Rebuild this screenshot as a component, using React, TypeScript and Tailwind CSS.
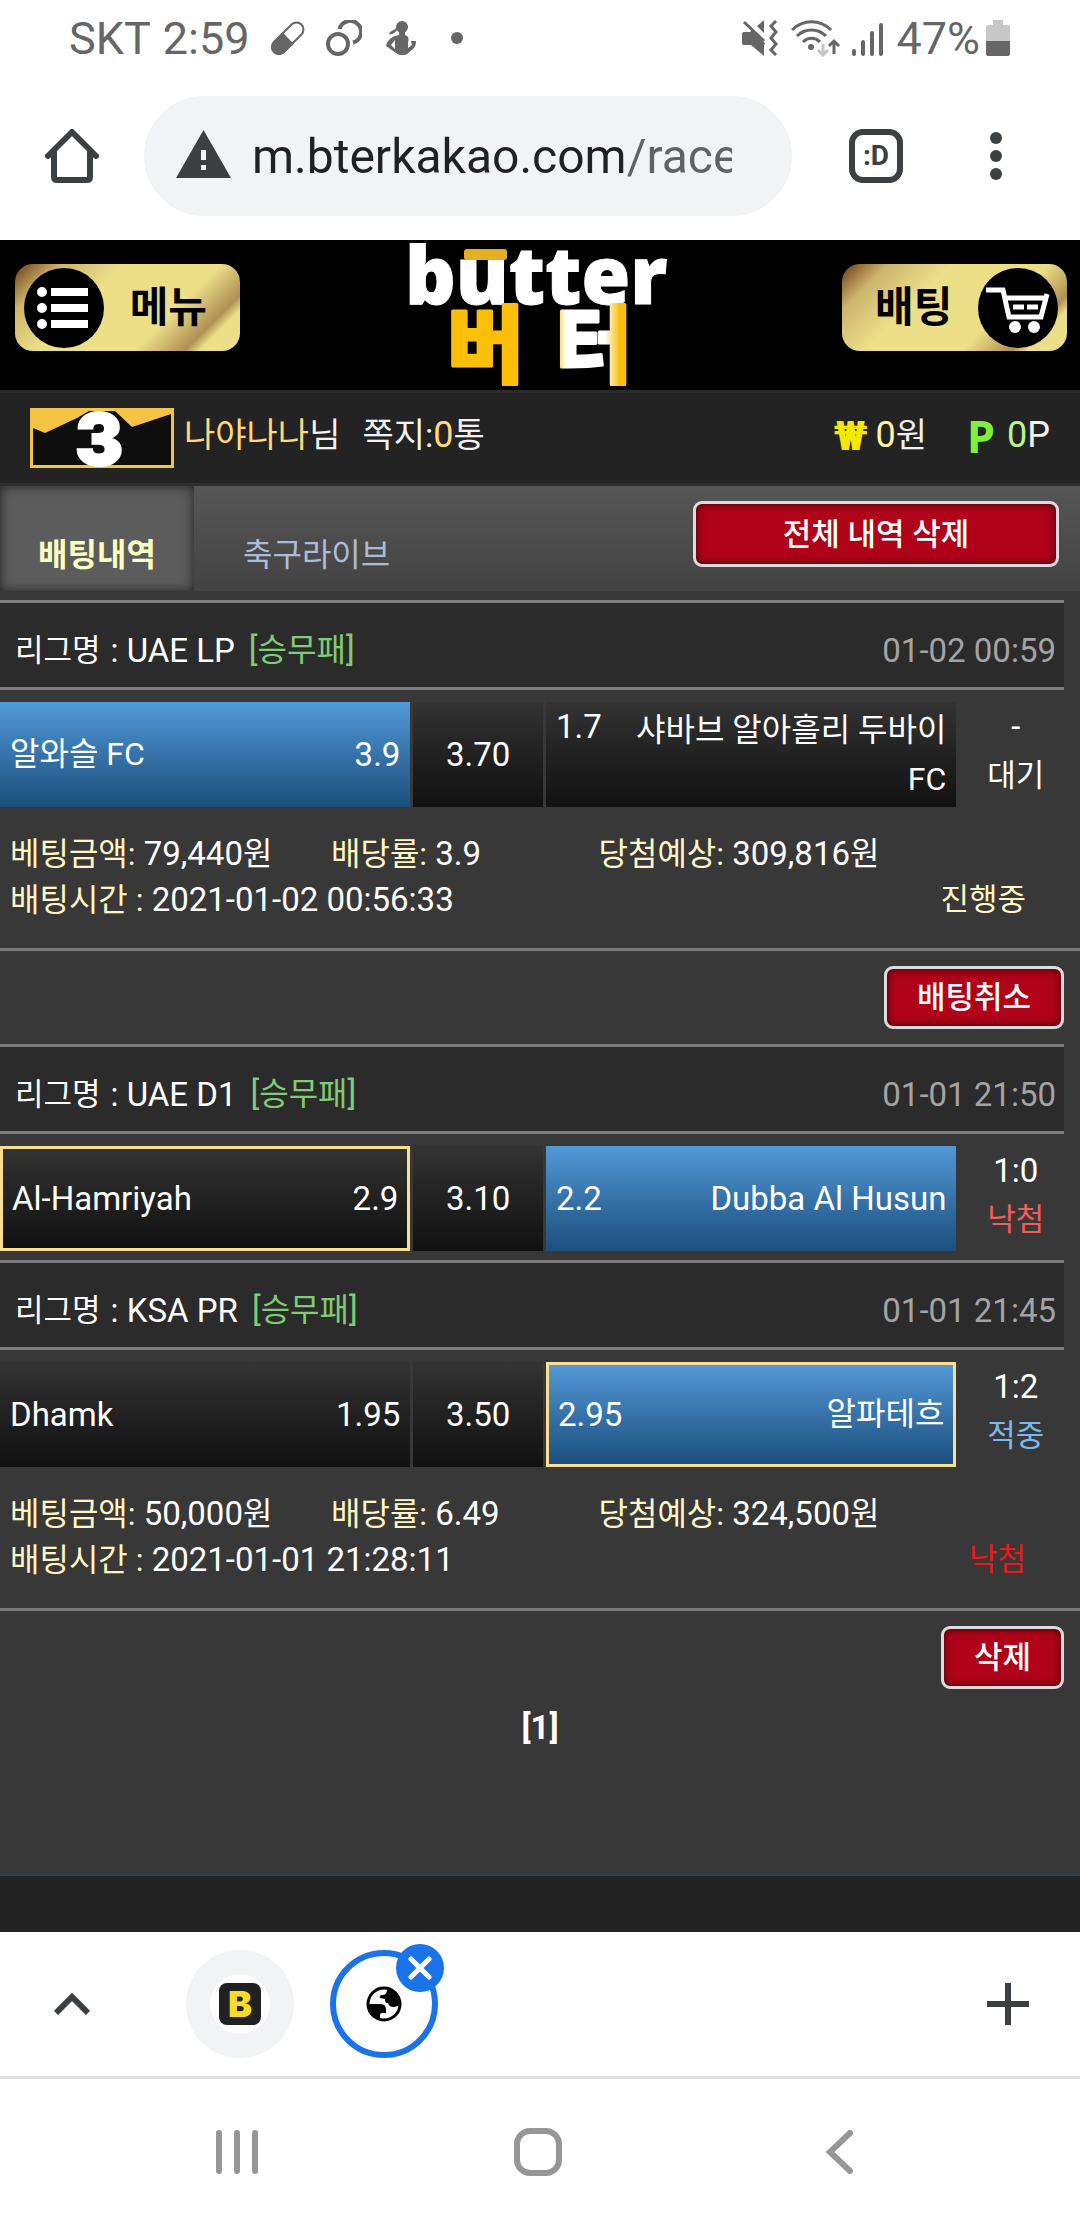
import type { ReactNode } from 'react';
import clsx from 'clsx';

type Side = 'home' | 'away';

interface Match {
  id: number;
  league: string;
  date: string;
  home: string;
  homeOdds: string;
  drawOdds: string;
  away: string;
  awayOdds: string;
  picked: Side;
  winner?: Side;
  score: string;
  result: string;
  resultClass: string;
}

interface Slip {
  id: number;
  matches: Match[];
  amount: string;
  odds: string;
  expected: string;
  time: string;
  status: string;
  statusClass: string;
  action: string;
}

const slips: Slip[] = [
  {
    id: 1,
    matches: [
      {
        id: 11,
        league: 'UAE LP',
        date: '01-02 00:59',
        home: '알와슬 FC',
        homeOdds: '3.9',
        drawOdds: '3.70',
        away: '샤바브 알아흘리 두바이 FC',
        awayOdds: '1.7',
        picked: 'home',
        score: '-',
        result: '대기',
        resultClass: 'text-white',
      },
    ],
    amount: '79,440',
    odds: '3.9',
    expected: '309,816',
    time: '2021-01-02 00:56:33',
    status: '진행중',
    statusClass: 'text-[#fff6c4]',
    action: '배팅취소',
  },
  {
    id: 2,
    matches: [
      {
        id: 21,
        league: 'UAE D1',
        date: '01-01 21:50',
        home: 'Al-Hamriyah',
        homeOdds: '2.9',
        drawOdds: '3.10',
        away: 'Dubba Al Husun',
        awayOdds: '2.2',
        picked: 'away',
        winner: 'home',
        score: '1:0',
        result: '낙첨',
        resultClass: 'text-[#f25c5c]',
      },
      {
        id: 22,
        league: 'KSA PR',
        date: '01-01 21:45',
        home: 'Dhamk',
        homeOdds: '1.95',
        drawOdds: '3.50',
        away: '알파테흐',
        awayOdds: '2.95',
        picked: 'away',
        winner: 'away',
        score: '1:2',
        result: '적중',
        resultClass: 'text-[#7ab8f0]',
      },
    ],
    amount: '50,000',
    odds: '6.49',
    expected: '324,500',
    time: '2021-01-01 21:28:11',
    status: '낙첨',
    statusClass: 'text-[#e81a1a]',
    action: '삭제',
  },
];

function StatusBar() {
  return (
    <div className="flex h-18 items-center justify-between pt-1 pr-[70px] pl-[69px] text-[45px] leading-none text-[#666]">
      <div className="flex items-center">
        <span>SKT</span>
        <span className="ml-3">2:59</span>
        <svg className="ml-5 size-9" viewBox="0 0 36 36" fill="none">
          <g transform="rotate(45 18 18)">
            <rect x="11" y="-1" width="14" height="38" rx="7" stroke="currentColor" strokeWidth="2" />
            <path d="M10 18h16v13a8 8 0 0 1-16 0z" fill="currentColor" />
          </g>
        </svg>
        <svg className="ml-5 size-9" viewBox="0 0 36 36" fill="none" stroke="currentColor" strokeWidth="4">
          <circle cx="12" cy="24" r="10" />
          <path d="M13.500 9A11 11 0 1 1 27 22.500" />
        </svg>
        <svg className="ml-6 h-[34px] w-[30px]" viewBox="0 0 30 34" fill="currentColor">
          <circle cx="16" cy="6" r="6" />
          <path d="M11 6C8 10 5 9 3 13c3 1 6-1 8-4z" />
          <path d="M13 10h6v4c4 1 4 4 3 8v5l4-3-1-4h5c0 4-1 6-3 8l-6 5c-4 2-9 1-11-1l-10-7c1-5 4-8 9-10l4-1zM9 19l-4 5 4 4z" fillRule="evenodd" />
        </svg>
        <span className="ml-[35px] size-3 rounded-full bg-[#666]" />
      </div>
      <div className="flex items-center">
        <svg className="h-9 w-[37px]" viewBox="0 0 37 36" fill="currentColor">
          <path d="M2 12h7L22 24v12L9 25H2a2 2 0 0 1-2-2v-9a2 2 0 0 1 2-2zM22 0v13l-7-7z" />
          <path d="M2 2l20 19" stroke="currentColor" strokeWidth="3" />
          <path d="M8 12l14 13" stroke="currentColor" strokeWidth="4" />
          <path d="M34 1l-5 5 5 6-5 6 5 6-5 6 5 5" fill="none" stroke="currentColor" strokeWidth="3" />
        </svg>
        <svg className="ml-3 h-[37px] w-[49px]" viewBox="0 0 49 37" fill="none" stroke="currentColor" strokeWidth="3">
          <path d="M1 10c11-11 28-11 39 0M6 16c8-8 21-8 29 0M12 22c5-5 12-5 17 0" />
          <circle cx="20" cy="27" r="3" fill="currentColor" stroke="none" />
          <path d="M32 24v11M27 30l5 5 5-5" stroke="#c4c4c4" />
          <path d="M43 34V22M38 26l5-5 5 5" />
        </svg>
        <svg className="ml-3 h-9 w-8" viewBox="0 0 32 36" stroke="currentColor" strokeWidth="4" strokeLinecap="round">
          <path d="M2 31v3M11 22v12M20 13v21M29 5v29" />
        </svg>
        <span className="ml-3">47%</span>
        <svg className="ml-[6px] h-9 w-6" viewBox="0 0 24 36">
          <path d="M7 0h10v5h5a2 2 0 0 1 2 2v14H0V7a2 2 0 0 1 2-2h5z" fill="#c8c8c8" />
          <path d="M0 21h24v13a2 2 0 0 1-2 2H2a2 2 0 0 1-2-2z" fill="#666" />
        </svg>
      </div>
    </div>
  );
}

function AddressBar() {
  return (
    <div className="flex h-[168px] items-center pr-[57px] pl-[45px] text-[#3c4043]">
      <button aria-label="홈">
        <svg className="size-[54px]" viewBox="0 0 54 54" fill="none" stroke="currentColor" strokeWidth="6" strokeLinecap="round">
          <path d="M3 27L27 3l24 24" strokeLinejoin="round" />
          <path d="M9 24v24q0 3 3 3h30q3 0 3-3V24" />
        </svg>
      </button>
      <div className="ml-[45px] flex h-30 min-w-0 flex-1 items-center rounded-full bg-[#f1f3f4] pr-15 pl-8">
        <svg className="mb-1 h-12 w-[55px] shrink-0" viewBox="0 0 55 48">
          <path d="M27.500 0L55 48H0z" fill="currentColor" />
          <path d="M25 20h5v10h-5zM25 35h5v5h-5z" fill="#f1f3f4" />
        </svg>
        <input
          type="text"
          aria-label="주소"
          defaultValue="m.bterkakao.com/race"
          className="ml-[21px] min-w-0 flex-1 bg-linear-[90deg,#202124_371px,#5f6368_371px] bg-clip-text pt-[2px] text-[48px] text-[#202124] outline-none [-webkit-text-fill-color:transparent]"
        />
      </div>
      <button
        aria-label="탭"
        className="ml-[57px] flex size-[54px] items-center justify-center rounded-[14px] border-6 border-[#3c4043] text-[28px] leading-none font-bold"
      >
        :D
      </button>
      <button aria-label="메뉴 더보기" className="ml-[66px] flex w-[54px] flex-col items-center gap-[6px]">
        <span className="size-3 rounded-full bg-[#3c4043]" />
        <span className="size-3 rounded-full bg-[#3c4043]" />
        <span className="size-3 rounded-full bg-[#3c4043]" />
      </button>
    </div>
  );
}

function GoldButton({ children }: { children: ReactNode }) {
  return (
    <button className="flex h-[87px] w-[225px] items-center justify-between rounded-[18px] bg-linear-[135deg,#6b3a14_0%,#cdb56d_15%,#ecdf88_35%,#ecdf88_66%,#b09055_82%,#ecdf88_87%] px-[9px] text-[42px] leading-none font-bold text-black">
      {children}
    </button>
  );
}

function Logo() {
  return (
    <svg className="h-[150px] w-66 overflow-visible" viewBox="0 0 264 150" role="img" aria-label="butter 버터">
      <defs>
        <linearGradient id="melt" x1="0" y1="0" x2="1" y2="0">
          <stop offset="0" stopColor="#fbbf0a" />
          <stop offset="0.14" stopColor="#fff" />
          <stop offset="0.64" stopColor="#fff" />
          <stop offset="0.84" stopColor="#fbbf0a" />
        </linearGradient>
      </defs>
      <text x="-4" y="64" fill="#fff" stroke="#fff" strokeWidth="1" className="font-['Open_Sans',sans-serif] text-[79px] font-extrabold">
        butter
      </text>
      <rect x="55" y="9" width="43" height="11" rx="3" fill="#e2b022" />
      <g strokeWidth="3" strokeLinejoin="round" className="font-['Noto_Sans_CJK_KR',sans-serif] text-[84px] font-black">
        <text x="38" y="136" fill="#fbbf0a" stroke="#fbbf0a">버</text>
        <text x="146" y="136" fill="url(#melt)" stroke="url(#melt)">터</text>
      </g>
    </svg>
  );
}

function SiteHeader() {
  return (
    <header className="flex h-[153px] items-start justify-between border-b-3 border-[#2b2b2b] bg-black pr-[13px] pl-[15px]">
      <div className="pt-6">
        <GoldButton>
          <svg className="size-20" viewBox="0 0 80 80" fill="#fff">
            <circle cx="40" cy="40" r="40" fill="#000" />
            <circle cx="18" cy="24" r="5" />
            <circle cx="18" cy="40" r="5" />
            <circle cx="18" cy="56" r="5" />
            <path d="M27 20h37v8H27zM27 36h37v8H27zM27 52h37v8H27z" />
          </svg>
          <span className="pr-6">메뉴</span>
        </GoldButton>
      </div>
      <Logo />
      <div className="pt-6">
        <GoldButton>
          <span className="pl-6">배팅</span>
          <svg className="size-20" viewBox="0 0 80 80" fill="none" stroke="#fff" strokeWidth="5">
            <circle cx="40" cy="40" r="40" fill="#000" stroke="none" />
            <path d="M8 22h17l6 27h32l6-23M27 30h41" />
            <path d="M35 39h11M49 39h11" />
            <circle cx="37" cy="59" r="6" fill="#fff" stroke="none" />
            <circle cx="56" cy="59" r="6" fill="#fff" stroke="none" />
          </svg>
        </GoldButton>
      </div>
    </header>
  );
}

function UserBar() {
  return (
    <div className="flex h-[93px] items-center border-b-3 border-[#2e2e2e] bg-[#232323] px-[30px] text-[34px] leading-none text-[#f2f2f2]">
      <svg className="h-15 w-36" viewBox="0 0 144 60" role="img" aria-label="레벨 3">
        <path d="M0 0h144v60H0z" fill="#f5c445" />
        <path d="M3 20l12 5 32-15 12-7h26l17 16 39-13v51H3z" fill="#0e0e0e" />
        <text x="69" y="57" textAnchor="middle" fill="#fff" stroke="#fff" strokeWidth="2" className="font-[Inter,sans-serif] text-[72px] font-black">
          3
        </text>
      </svg>
      <div className="ml-[10px] flex flex-1 items-center pb-[6px]">
        <span className="text-[#ffd978]">나야나나</span>
        <span>님</span>
        <span className="ml-[22px]">쪽지:</span>
        <span className="text-[36px] text-[#ffd978]">0</span>
        <span>통</span>
        <span className="ml-auto pt-1 text-[40px] font-black text-[#f7e600]">₩</span>
        <span className="ml-2 text-[36px] text-[#fff3a6]">0</span>
        <span>원</span>
        <span className="ml-10 font-['Noto_Sans',sans-serif] text-[45px] font-bold text-[#80f038]">P</span>
        <span className="ml-3 text-[36px] text-[#b9f78c]">0</span>
        <span className="text-[36px]">P</span>
      </div>
    </div>
  );
}

function RedButton({ children, className }: { children: ReactNode; className?: string }) {
  return (
    <button
      className={clsx(
        'rounded-[9px] border-3 border-[#dcdcdc] bg-[#b00319] text-[31px] leading-none font-medium text-white shadow-[inset_0_0_8px_#3a0008]',
        className,
      )}
    >
      {children}
    </button>
  );
}

function Tabs() {
  return (
    <nav className="flex h-[105px] items-stretch bg-linear-to-b from-[#565656] to-[#434343] text-[32px] leading-none">
      <a href="#bets" className="flex w-[194px] items-center justify-center bg-[#5c5c5c] pt-8 font-bold text-[#faffc0] shadow-[inset_0_0_12px_#222]">
        배팅내역
      </a>
      <a href="#live" className="flex items-center px-[49px] pt-8 text-[#aebbd6]">
        축구라이브
      </a>
      <RedButton className="mt-[15px] mr-[21px] ml-auto h-[66px] w-[366px]">전체 내역 삭제</RedButton>
    </nav>
  );
}

function OddsCell({ name, odds, side, match }: { name: string; odds: string; side: Side; match: Match }) {
  const isPicked = match.picked === side;
  const isWinner = match.winner === side;
  return (
    <div
      className={clsx(
        'flex min-w-0 items-center justify-between gap-6',
        side === 'away' && 'flex-row-reverse',
        isPicked ? 'bg-linear-to-b from-[#5299d8] to-[#1c4f7d]' : 'bg-linear-to-b from-[#333] to-[#111]',
        isWinner ? 'border-3 border-[#fbdf90] px-[9px]' : 'px-[10px]',
      )}
    >
      <span className={clsx(side === 'away' && 'text-right', /[가-힣]/.test(name) ? 'text-[32px]' : 'text-[33px]')}>
        {name}
      </span>
      <span className={clsx(name.length > 14 && 'self-start')}>{odds}</span>
    </div>
  );
}

function MatchRow({ match }: { match: Match }) {
  return (
    <article className="pb-[9px] text-[33px] leading-[49px] text-white">
      <header className="mr-4 mb-3 flex h-[90px] items-center border-y-3 border-[#7d7d7d] bg-[#2b2b2b] pt-[10px] pr-2 pl-[15px]">
        <span className="text-[31px]">리그명</span>
        <span className="ml-[10px]">: {match.league}</span>
        <span className="ml-[14px] text-[#7fcc72]">
          [<span className="text-[32px]">승무패</span>]
        </span>
        <time className="ml-auto text-[#a3a3a3]">{match.date}</time>
      </header>
      <div className="grid min-h-[105px] grid-cols-[38%_12%_38%_1fr] gap-x-[3px]">
        <OddsCell name={match.home} odds={match.homeOdds} side="home" match={match} />
        <div className="flex items-center justify-center bg-linear-to-b from-[#333] to-[#111]">{match.drawOdds}</div>
        <OddsCell name={match.away} odds={match.awayOdds} side="away" match={match} />
        <div className="pr-2 text-center">
          <p>{match.score}</p>
          <p className={clsx('text-[31px]', match.resultClass)}>{match.result}</p>
        </div>
      </div>
    </article>
  );
}

function Info({ label, children }: { label: string; children: ReactNode }) {
  return (
    <p>
      <span className="text-[32px] text-[#fff6c4]">{label}</span> {children}
    </p>
  );
}

function Won() {
  return <span className="text-[32px]">원</span>;
}

function BetSlip({ slip }: { slip: Slip }) {
  return (
    <section>
      {slip.matches.map((match) => (
        <MatchRow key={match.id} match={match} />
      ))}
      <div className="border-b-3 border-[#7a7a7a] pt-[15px] pb-[25px] pl-[10px] text-[33px] leading-[45px] text-white">
        <div className="grid grid-cols-[30%_25%_1fr]">
          <Info label="베팅금액:">
            {slip.amount}
            <Won />
          </Info>
          <Info label="배당률:">{slip.odds}</Info>
          <Info label="당첨예상:">
            {slip.expected}
            <Won />
          </Info>
        </div>
        <div className="flex justify-between pr-[54px]">
          <Info label="배팅시간 :">{slip.time}</Info>
          <p className={clsx('text-[31px]', slip.statusClass)}>{slip.status}</p>
        </div>
      </div>
      <div className="flex justify-end py-[15px] pr-4">
        <RedButton className="h-[63px] px-[30px]">{slip.action}</RedButton>
      </div>
    </section>
  );
}

function TabStrip() {
  return (
    <div className="flex h-[147px] items-center border-b-3 border-[#dedede] bg-white pr-[51px] pl-[54px] text-[#3c4043]">
      <button aria-label="펼치기">
        <svg className="h-6 w-9" viewBox="0 0 36 24" fill="none" stroke="currentColor" strokeWidth="6">
          <path d="M2 21L18 5l16 16" />
        </svg>
      </button>
      <button aria-label="탭 1" className="ml-24 flex size-[108px] items-center justify-center rounded-full bg-[#f1f3f4]">
        <span className="flex size-15 items-center justify-center rounded-full bg-white">
          <span className="flex size-[42px] items-center justify-center rounded-[8px] bg-[#212121] font-[Inter,sans-serif] text-[36px] leading-none font-black text-[#f7dc28]">
            B
          </span>
        </span>
      </button>
      <div className="relative ml-9">
        <button aria-label="탭 2" className="flex size-[108px] items-center justify-center rounded-full border-6 border-[#1a73e8] text-black">
          <svg className="size-9" viewBox="0 0 36 36" fill="currentColor">
            <circle cx="18" cy="18" r="16" fill="none" stroke="currentColor" strokeWidth="3" />
            <path d="M21 3l8 3 5 12-2 2-4 1c-3 0-5-1-6-4-3 0-3-2-3-4l-5-1c-1-2 1-3 2-3 3 0 5-1 5-6z" />
            <path d="M2 18h12c4 0 6 2 6 6v3h-4c-2 0-2 2-2 3v4C7 32 2 26 2 18z" />
          </svg>
        </button>
        <button aria-label="탭 닫기" className="absolute -top-[6px] -right-[6px] flex size-12 items-center justify-center rounded-full bg-[#1a73e8]">
          <svg className="size-6" viewBox="0 0 24 24" stroke="#fff" strokeWidth="5" strokeLinecap="round">
            <path d="M3 3l18 18M21 3L3 21" />
          </svg>
        </button>
      </div>
      <button aria-label="새 탭" className="ml-auto">
        <svg className="size-[42px]" viewBox="0 0 42 42" stroke="currentColor" strokeWidth="6">
          <path d="M21 0v42M0 21h42" />
        </svg>
      </button>
    </div>
  );
}

function SystemNav() {
  return (
    <div className="grid h-[141px] grid-cols-[28%_28%_28%] content-center justify-center justify-items-center bg-white pt-1 pr-1 text-[#969696]">
      <button aria-label="최근 앱">
        <svg className="size-12" viewBox="0 0 48 48" stroke="currentColor" strokeWidth="6" strokeLinecap="round">
          <path d="M6 5v38M24 5v38M42 5v38" />
        </svg>
      </button>
      <button aria-label="홈 화면">
        <svg className="size-12" viewBox="0 0 48 48" fill="none" stroke="currentColor" strokeWidth="6">
          <rect x="3" y="3" width="42" height="42" rx="13" />
        </svg>
      </button>
      <button aria-label="뒤로">
        <svg className="size-12" viewBox="0 0 48 48" fill="none" stroke="currentColor" strokeWidth="6" strokeLinecap="round">
          <path d="M35 5L15 24l20 19" />
        </svg>
      </button>
    </div>
  );
}

export default function App() {
  return (
    <div className="flex min-h-screen flex-col bg-white font-[Roboto,'Noto_Sans_CJK_KR',sans-serif]">
      <StatusBar />
      <AddressBar />
      <SiteHeader />
      <UserBar />
      <Tabs />
      <main className="flex-1 border-b-3 border-[#2f3f4c] bg-[#383838] pt-[9px]">
        {slips.map((slip) => (
          <BetSlip key={slip.id} slip={slip} />
        ))}
        <p className="text-center text-[33px] leading-[48px] font-bold text-white">[1]</p>
      </main>
      <div className="h-14 bg-[#232323]" />
      <TabStrip />
      <SystemNav />
    </div>
  );
}
